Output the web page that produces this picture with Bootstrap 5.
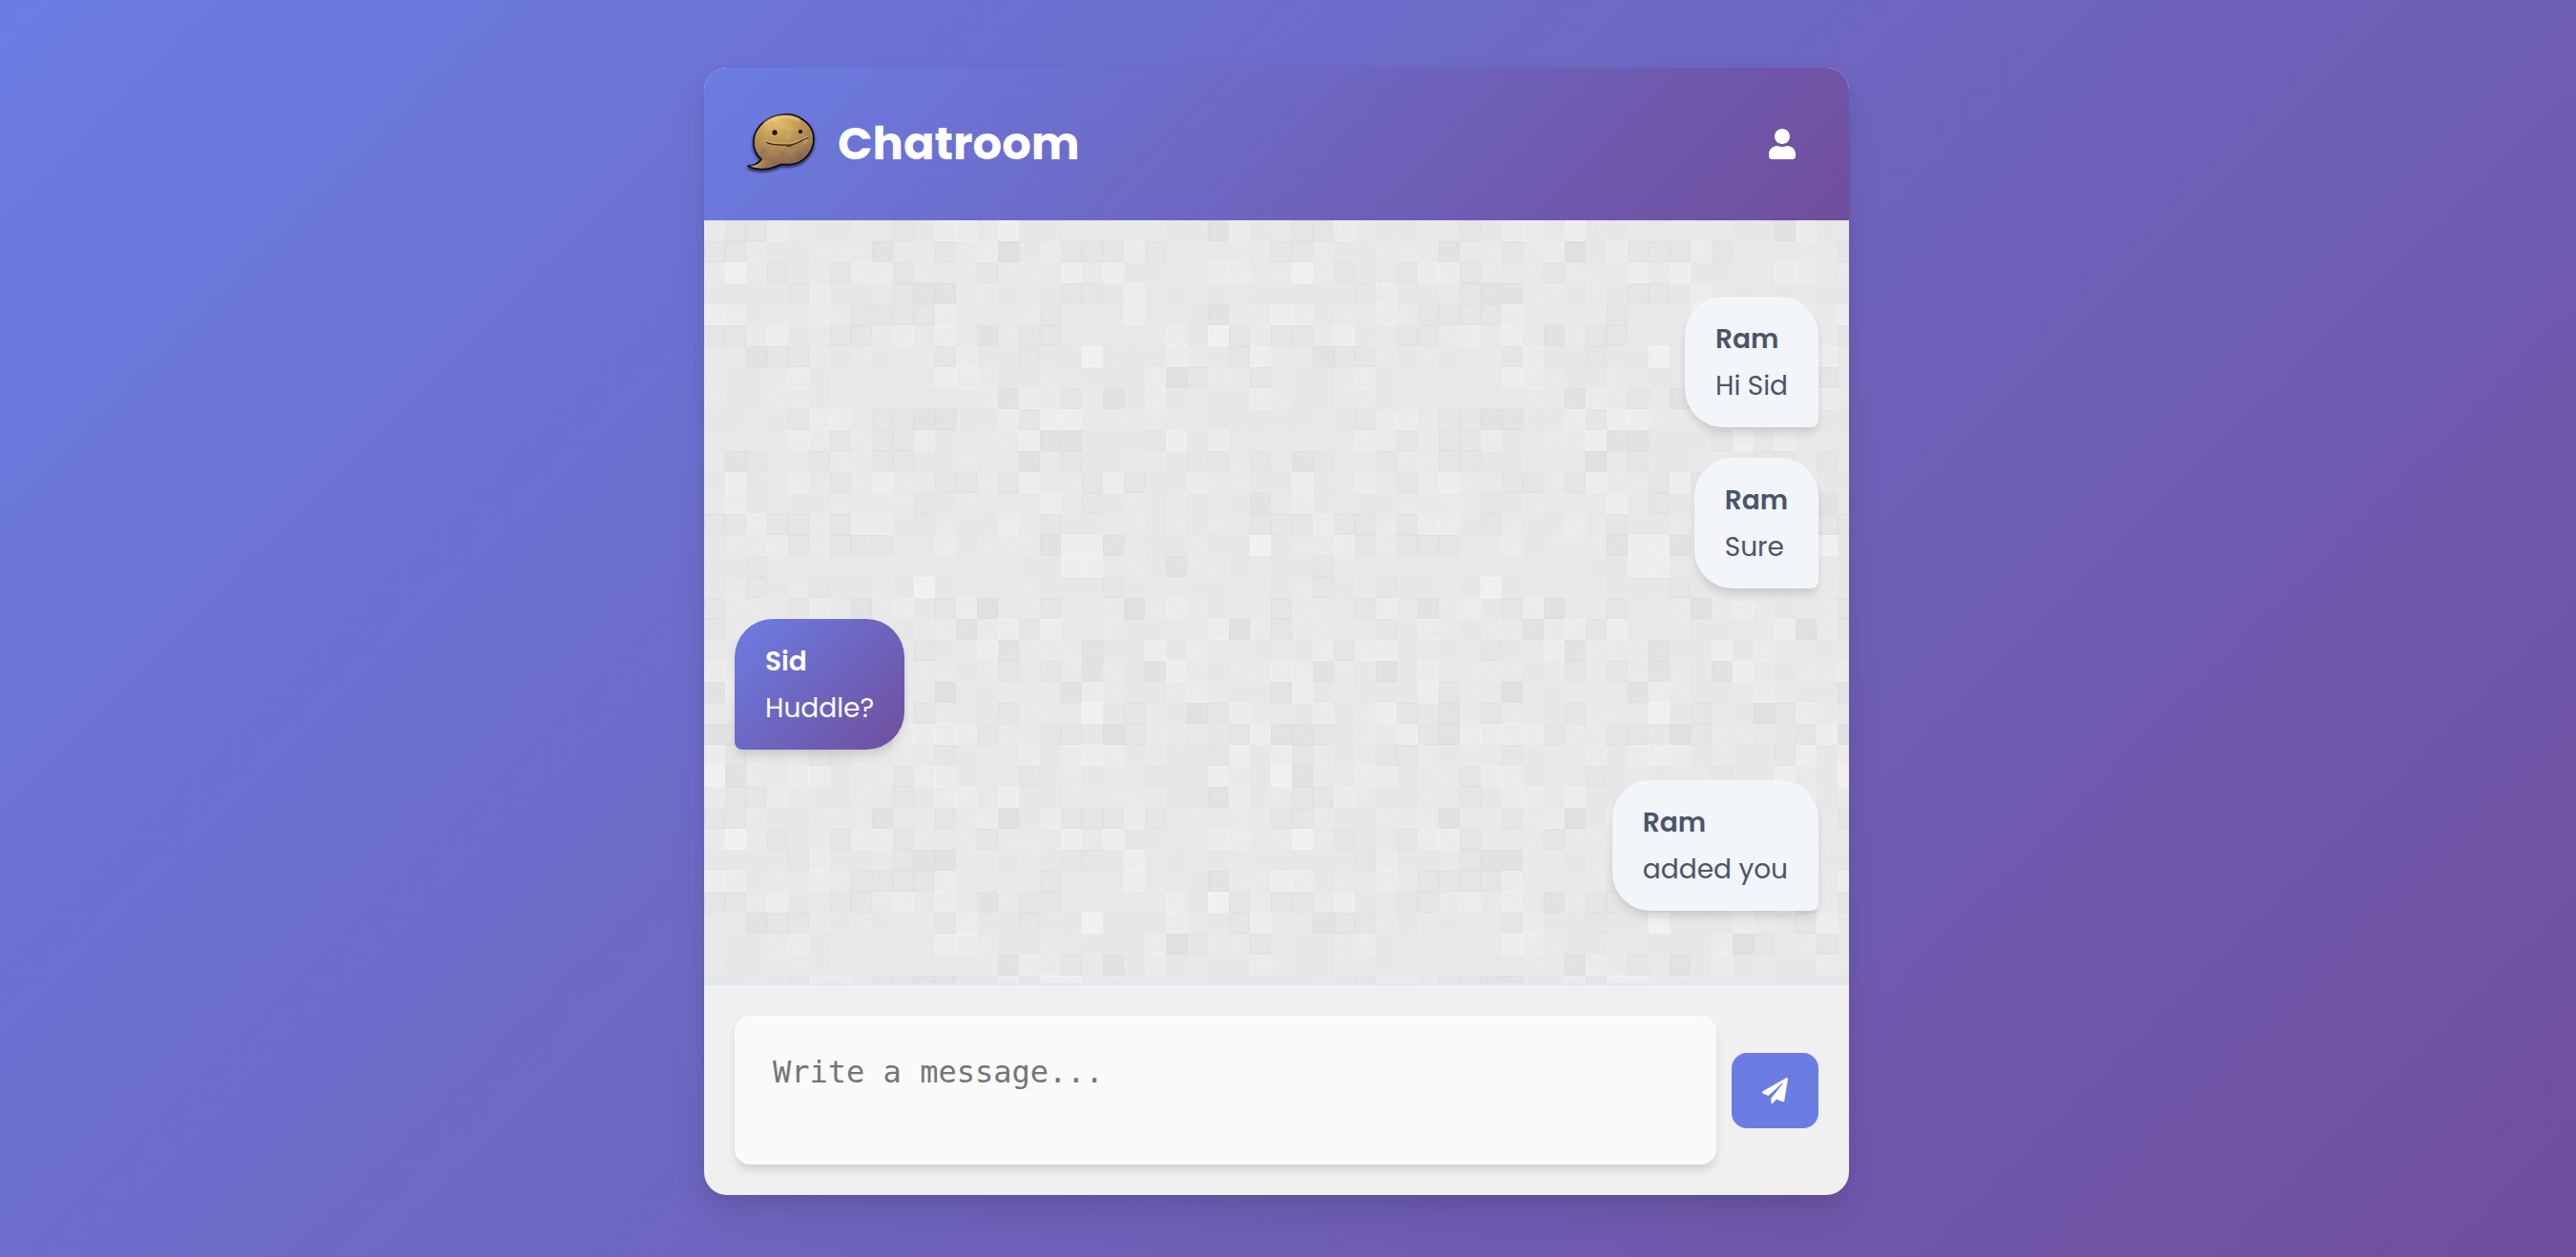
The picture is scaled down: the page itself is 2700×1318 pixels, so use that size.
<!DOCTYPE html>
<html lang="en">
<head>
<meta charset="utf-8">
<meta name="viewport" content="width=device-width, initial-scale=1">
<title>Chatroom</title>
<link rel="stylesheet" href="https://cdn.jsdelivr.net/npm/bootstrap@5.3.0/dist/css/bootstrap.min.css">
<style>
:root {
  --brand-gradient: linear-gradient(135deg, #6b7de3 0%, #704e9d 100%);
  --soft-shadow: 0 8px 12px -2px rgba(0, 0, 0, .1), 0 4px 8px -2px rgba(0, 0, 0, .06);
}
body {
  background: var(--brand-gradient);
  font-family: Poppins, Inter, sans-serif;
  font-size: 28px;
  padding: 71px 24px 65px 0;
}
.chat-shell {
  max-width: 1200px;
  border-radius: 24px;
  background: #f0f0f0;
  box-shadow: 0 20px 40px -6px rgba(0, 0, 0, .1), 0 8px 20px -4px rgba(0, 0, 0, .08);
}
.chat-top { background: var(--brand-gradient); padding: 40px; }
.chat-brand { gap: 20px; }
.chat-logo { width: 80px; height: 80px; }
.chat-title { font-size: 48px; line-height: 60px; font-weight: 700; }
.user-btn { padding: 16px; line-height: 1; }
.chat-feed { padding: 80px 32px 76px; gap: 32px; background: #e9e9e9; }
.mosaic { z-index: 0; }
.bubble {
  z-index: 1;
  padding: 23px 32px 21px;
  border-radius: 40px;
  line-height: 44px;
  box-shadow: var(--soft-shadow);
}
.bubble-name { font-weight: 600; margin-bottom: 5px; }
.bubble-own { background: #f2f5fa; color: #4a5568; border-bottom-right-radius: 8px; }
.bubble-peer { background: var(--brand-gradient); color: #fff; border-bottom-left-radius: 8px; }
.composer { padding: 32px; border-top: 2px solid #e2e8f0; }
.composer-input {
  height: 156px;
  padding: 40px;
  border: 0;
  border-radius: 16px;
  background: #fafafa;
  font: 32px/38px "DejaVu Sans Mono", monospace;
  resize: none;
  box-shadow: var(--soft-shadow);
}
.composer-input:focus { background: #fafafa; box-shadow: var(--soft-shadow); }
.composer-input::placeholder { color: #757575; }
.send-btn { padding: 26px 32px; border-radius: 16px; background: #6b7de3; line-height: 1; }
.send-btn:hover { background: #5c6ed6; }
</style>
</head>
<body class="min-vh-100">
<main class="chat-shell mx-auto overflow-hidden">
  <header class="chat-top d-flex align-items-center justify-content-between text-white">
    <div class="chat-brand d-flex align-items-center">
      <svg class="chat-logo" viewBox="0 0 80 80" aria-hidden="true">
        <defs>
          <radialGradient id="skin" cx=".42" cy=".1" r=".95">
            <stop offset="0" stop-color="#e6c46c"/>
            <stop offset=".3" stop-color="#c8a15a"/>
            <stop offset=".65" stop-color="#a58154"/>
            <stop offset="1" stop-color="#75594c"/>
          </radialGradient>
          <linearGradient id="tail" x1="0" y1="0" x2="1" y2="0">
            <stop offset="0" stop-color="#e0b75c"/>
            <stop offset="1" stop-color="#9a774c" stop-opacity="0"/>
          </linearGradient>
          <filter id="logoShade" x="-20%" y="-20%" width="140%" height="140%">
            <feDropShadow dx="0" dy="2" stdDeviation="1.6" flood-color="#0a0a28" flood-opacity=".8"/>
          </filter>
          <filter id="blurSoft" x="-50%" y="-50%" width="200%" height="200%"><feGaussianBlur stdDeviation="1"/></filter>
        </defs>
        <path filter="url(#logoShade)" fill="url(#skin)" stroke="#0d0a0a" stroke-width="1.6" stroke-linejoin="round" d="M44 9C57 8 72 17 74.500 30C77 46 66 60 50 61.500C46 62 43 61 40 61.500C33 65 26 67 19 66.500C13 66 9 65 6 63C12 63 17 60 20 56C14 51 11 44 12 35C14 21 27 10 44 9Z"/>
        <path fill="url(#tail)" d="M8 63C14 63 19 60 22 56C28 58 32 60 38 61C29 65 18 67 8 63Z"/>
        <path filter="url(#blurSoft)" fill="none" stroke="#f8df94" stroke-width="2" opacity=".75" d="M23 18C33 10 49 9 60 15"/>
        <g filter="url(#blurSoft)" fill="#e4c274" opacity=".35"><circle cx="42" cy="20" r="3"/><circle cx="50" cy="24" r="3"/><circle cx="48" cy="32" r="3"/><circle cx="66" cy="37" r="3"/><circle cx="27" cy="22" r="3"/></g>
        <g filter="url(#blurSoft)" fill="#5f4b4c" opacity=".2"><circle cx="22" cy="47" r="3"/><circle cx="42" cy="51" r="3"/><circle cx="60" cy="52" r="4"/></g>
        <ellipse cx="34" cy="28" rx="3.600" ry="3.400" fill="#e0b55c" opacity=".6"/>
        <ellipse cx="61" cy="27" rx="3" ry="3" fill="#e0b55c" opacity=".6"/>
        <circle cx="34" cy="28" r="2.700" fill="#191512"/>
        <circle cx="61" cy="27" r="2.300" fill="#191512"/>
        <path fill="none" stroke="#e8c885" stroke-width="1" opacity=".6" d="M25 36.500C33 40 43 39 50 39C58 38 63 34 69 32"/>
        <path fill="none" stroke="#2b2019" stroke-width="1.200" stroke-linecap="round" d="M26 38.500C33 42 43 41 50 41C58 40 63 35 69 33.500"/>
        <path fill="none" stroke="#3b2b22" stroke-width="1" stroke-linecap="round" d="M47 42.500L52 42"/>
      </svg>
      <h1 class="chat-title mb-0">Chatroom</h1>
    </div>
    <button type="button" class="user-btn btn border-0 text-white" aria-label="Profile">
      <svg class="d-block" width="28" height="32" viewBox="0 0 448 512" fill="currentColor" aria-hidden="true"><path d="M224 256c70.7 0 128-57.3 128-128S294.7 0 224 0 96 57.300 96 128s57.300 128 128 128zm89.600 32h-16.700c-22.200 10.200-46.900 16-72.900 16s-50.600-5.800-72.900-16h-16.700C60.200 288 0 348.200 0 422.400V464c0 26.500 21.500 48 48 48h352c26.500 0 48-21.500 48-48v-41.600c0-74.200-60.200-134.400-134.400-134.400z"/></svg>
    </button>
  </header>

  <section class="chat-feed position-relative d-flex flex-column" aria-label="Messages">
    <svg class="mosaic position-absolute top-0 start-0 w-100 h-100" aria-hidden="true">
      <defs>
        <pattern id="tiles" width="594" height="594" patternUnits="userSpaceOnUse"></pattern>
        <filter id="grain" x="0" y="0" width="100%" height="100%">
          <feTurbulence type="fractalNoise" baseFrequency=".35" numOctaves="2" seed="4"/>
          <feColorMatrix values="0 0 0 0 .5  0 0 0 0 .5  0 0 0 0 .5  .18 0 0 0 -.04"/>
        </filter>
      </defs>
      <rect width="100%" height="100%" fill="url(#tiles)"/>
      <rect width="100%" height="100%" filter="url(#grain)" opacity=".3"/>
    </svg>
    <article class="bubble bubble-own position-relative align-self-end">
      <div class="bubble-name">Ram</div>
      <div>Hi Sid</div>
    </article>
    <article class="bubble bubble-own position-relative align-self-end">
      <div class="bubble-name">Ram</div>
      <div>Sure</div>
    </article>
    <article class="bubble bubble-peer position-relative align-self-start">
      <div class="bubble-name">Sid</div>
      <div>Huddle?</div>
    </article>
    <article class="bubble bubble-own position-relative align-self-end">
      <div class="bubble-name">Ram</div>
      <div>added you</div>
    </article>
  </section>

  <form class="composer d-flex align-items-center gap-3">
    <textarea class="composer-input form-control flex-fill" aria-label="Message" placeholder="Write a message..."></textarea>
    <button type="submit" class="send-btn btn border-0 text-white" aria-label="Send">
      <svg class="d-block" width="27" height="27" viewBox="0 0 512 512" fill="currentColor" aria-hidden="true"><path d="M476 3.200L12.500 270.600c-18.100 10.400-15.800 35.600 2.200 43.200L121 358.400l287.300-253.200c5.500-4.900 13.300 2.600 8.600 8.300L176 407v80.500c0 23.600 28.500 32.900 42.500 15.800L282 426l124.600 52.200c14.200 6 30.400-2.900 33-18.200l72-432C515 7.800 493.300-6.800 476 3.200z"/></svg>
    </button>
  </form>
</main>
<script src="https://cdn.jsdelivr.net/npm/bootstrap@5.3.0/dist/js/bootstrap.bundle.min.js"></script>
<script>
// Grey levels of the 27 x 27 mosaic tile, one digit per 22px square (0 dark, 9 light).
const rows = [
  "633764465347758446566644274", "336446662563671473337356565", "696345377365636658584455775",
  "444437445322664643348545454", "874657633337555635558554266", "336845336757526335555674936",
  "552336464553744344944476438", "544674555558764465444713663", "644664555555662763524745447",
  "445437753322447388666655444", "555576363374566822444384755", "523553663344655153445643363",
  "484575368653363866383447664", "574544666634655585346464542", "337336377436447534466464653",
  "466736333557466628825446449", "443655555555555448856426645", "463463446494555644434554456",
  "366537526743715635561676456", "366553476466267385564455816", "547377454534582666244847554",
  "772641475666463536264286466", "284544483651545552764467544", "547468342636543665943541376",
  "223466832777736633413665438", "736463364653455747874644384", "926577466377455346455344864"
];
const shades = [224, 225, 227, 230, 232, 233, 234, 236, 238, 241];
const tile = document.getElementById("tiles");
const addRect = attrs => {
  const r = document.createElementNS("http://www.w3.org/2000/svg", "rect");
  Object.entries(attrs).forEach(([k, val]) => r.setAttribute(k, val));
  tile.append(r);
};
rows.forEach((row, y) => [...row].forEach((d, x) => {
  const v = shades[d];
  addRect({x: x * 22, y: y * 22, width: 22, height: 22, fill: `rgb(${v},${v},${v})`, "shape-rendering": "crispEdges"});
  // Only the darkest and lightest squares carry a faint rim.
  if (d < 4 || d > 6) {
    const edge = d < 4 ? "rgba(0,0,0,.02)" : "rgba(255,255,255,.2)";
    addRect({x: x * 22 + .5, y: y * 22 + .5, width: 21, height: 21, fill: "none", stroke: edge});
  }
}));
</script>
</body>
</html>
